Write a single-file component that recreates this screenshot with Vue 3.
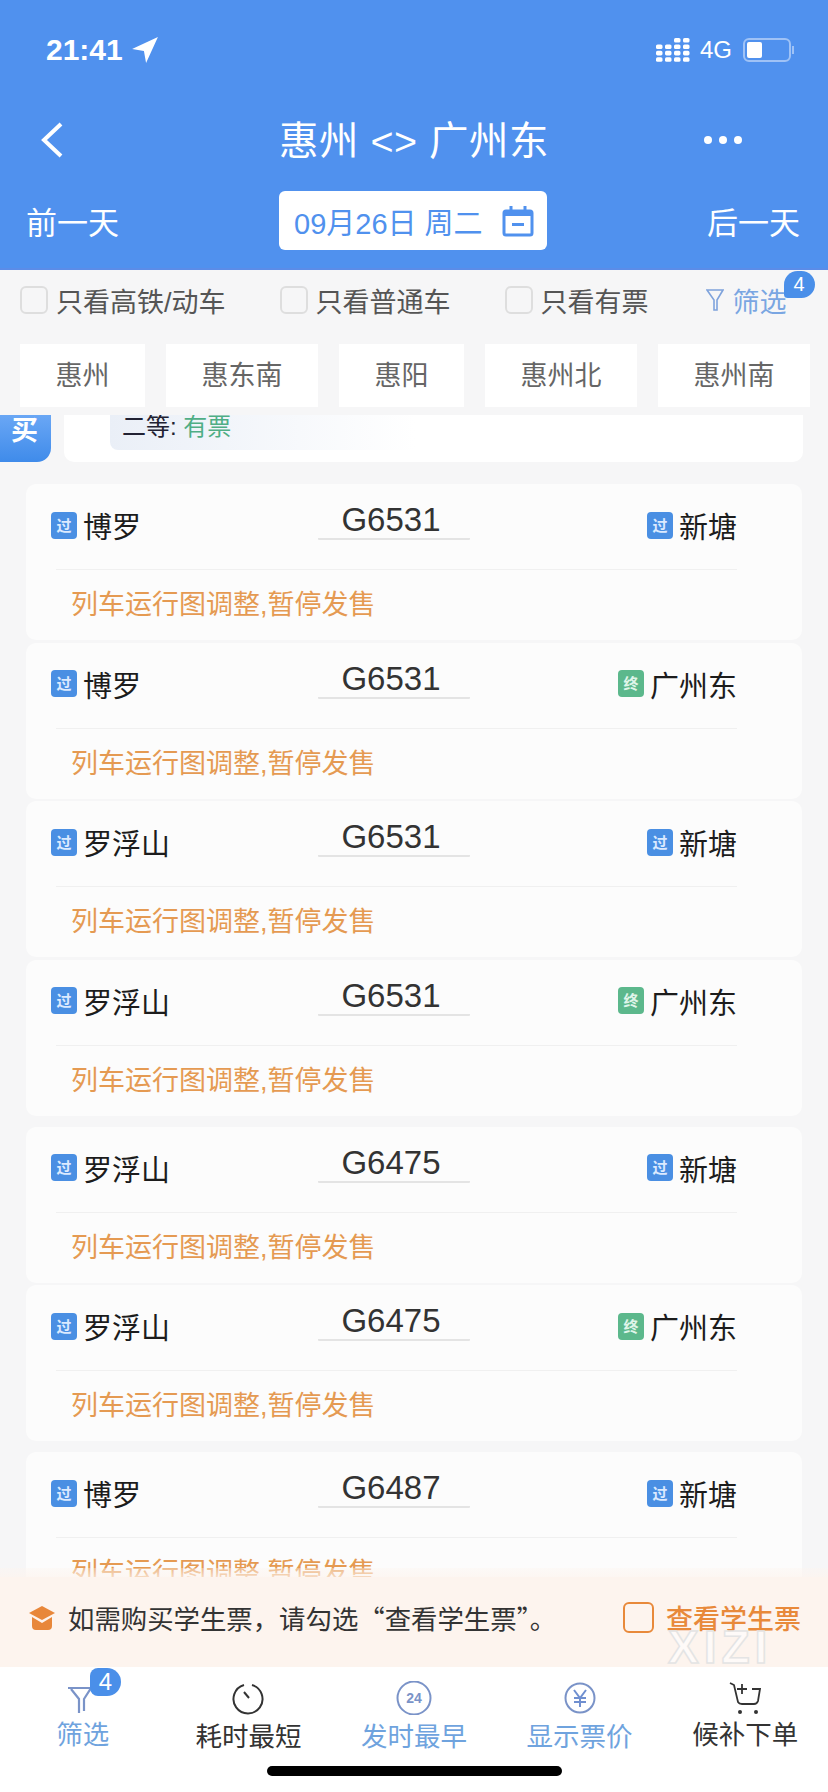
<template>
  <div class="page">
    <div class="header">
      <div class="status">
        <div class="time">
          21:41
          <svg class="loc" viewBox="0 0 26 26"><path d="M25 1 L1 12 L12 14 L14 25 Z" fill="#fff" /></svg>
        </div>
        <div class="status-right">
          <svg class="signal" width="34" height="25" viewBox="0 0 34 25">
            <g fill="#fff">
              <rect v-for="d in signalDots" :key="d.x + '-' + d.y" :x="d.x" :y="d.y" width="6.5" height="4.6" rx="1.6" />
            </g>
          </svg>
          <span class="net">4G</span>
          <div class="battery"><div class="battery-fill"></div></div>
          <div class="battery-tip"></div>
        </div>
      </div>
      <div class="nav">
        <svg class="back" width="24" height="36" viewBox="0 0 24 36">
          <path d="M21 2 L4 18 L21 34" fill="none" stroke="#fff" stroke-width="4" />
        </svg>
        <div class="title">惠州 &lt;&gt; 广州东</div>
        <div class="dots"><i></i><i></i><i></i></div>
      </div>
      <div class="date-row">
        <span class="day">前一天</span>
        <div class="date-box">
          <span>09月26日 周二</span>
          <svg width="32" height="32" viewBox="0 0 32 32">
            <g fill="none" stroke="#5091ee" stroke-width="3">
              <rect x="2" y="6" width="28" height="24" rx="2" />
              <path d="M9 1 V9 M23 1 V9" />
            </g>
            <rect x="2" y="6" width="28" height="5" fill="#5091ee" />
            <rect x="10" y="18" width="12" height="3" fill="#5091ee" />
          </svg>
        </div>
        <span class="day right">后一天</span>
      </div>
    </div>

    <div class="filters">
      <label class="check" v-for="f in filters" :key="f"><i class="box"></i>{{ f }}</label>
      <div class="filter-btn">
        <svg width="18" height="24" viewBox="0 0 18 24">
          <path d="M1 2 H17 L11 12 V22 L8 22 V12 Z" fill="none" stroke="#7fa3dc" stroke-width="1.6" />
        </svg>
        <span>筛选</span>
        <em class="badge small">4</em>
      </div>
    </div>

    <div class="stations">
      <div class="station" v-for="s in stations" :key="s">{{ s }}</div>
    </div>

    <div class="list">
      <div class="partial">
        <div class="buy">买</div>
        <div class="partial-card">
          <div class="seat">二等: <span>有票</span></div>
        </div>
      </div>

      <div class="group" v-for="(group, i) in groups" :key="i">
        <div class="card" v-for="(t, j) in group" :key="j">
          <div class="row">
            <div class="stop">
              <i class="tag">过</i>{{ t.from }}
            </div>
            <div class="train">{{ t.no }}</div>
            <div class="stop end">
              <i class="tag" :class="{ green: t.to === '广州东' }">{{ t.to === '广州东' ? '终' : '过' }}</i>{{ t.to }}
            </div>
          </div>
          <div class="line"></div>
          <div class="msg">列车运行图调整,暂停发售</div>
        </div>
      </div>
    </div>

    <div class="notice">
      <svg class="cap" width="28" height="26" viewBox="0 0 28 26">
        <path d="M14 1 L27 8 L14 15 L1 8 Z" fill="#e8873a" />
        <path d="M4 12 L14 18 L24 12 V21 Q24 25 20 25 H8 Q4 25 4 21 Z" fill="#e8873a" />
      </svg>
      <span class="notice-text">如需购买学生票，请勾选“查看学生票”。</span>
      <i class="notice-box"></i>
      <span class="notice-link">查看学生票</span>
    </div>

    <div class="tabs">
      <div class="tab on">
        <svg class="icon" width="36" height="34" viewBox="0 0 36 34">
          <path d="M3 7 H26 L19 18 V30 M14 32 V18 L6 8" fill="none" stroke="#7a93c8" stroke-width="2.2" />
        </svg>
        <em class="badge">4</em>
        <span class="up">筛选</span>
      </div>
      <div class="tab">
        <svg class="icon" width="36" height="34" viewBox="0 0 36 34">
          <path d="M14 4 A14.5 14.5 0 1 0 22 4" fill="none" stroke="#333" stroke-width="2" />
          <path d="M14 11 L19 17" stroke="#333" stroke-width="2" />
        </svg>
        <span>耗时最短</span>
      </div>
      <div class="tab on">
        <svg class="icon" width="36" height="34" viewBox="0 0 36 34">
          <circle cx="18" cy="17" r="16.5" fill="none" stroke="#7a93c8" stroke-width="2" />
          <text x="18" y="22" text-anchor="middle" class="svg-num">24</text>
        </svg>
        <span>发时最早</span>
      </div>
      <div class="tab on">
        <svg class="icon" width="36" height="34" viewBox="0 0 36 34">
          <circle cx="18" cy="17" r="14.5" fill="none" stroke="#7a93c8" stroke-width="2" />
          <path d="M12 9 L18 17 L24 9 M12 17 H24 M12 21 H24 M18 17 V26" fill="none" stroke="#6f8fd0" stroke-width="2" />
        </svg>
        <span>显示票价</span>
      </div>
      <div class="tab">
        <svg class="icon" width="36" height="34" viewBox="0 0 36 34">
          <path d="M3 2 L7 4 L11 21 Q12 23 15 23 H27 Q30 23 31 20 L33 8 H25 M10 8 H20 M15 3 V13" fill="none" stroke="#333" stroke-width="1.8" />
          <circle cx="13" cy="31" r="2" fill="#333" />
          <circle cx="29" cy="31" r="2" fill="#333" />
        </svg>
        <span class="up">候补下单</span>
      </div>
    </div>

    <div class="home"></div>
    <div class="mark">XIZI</div>
  </div>
</template>

<script setup>
const filters = ["只看高铁/动车", "只看普通车", "只看有票"];
const stations = ["惠州", "惠东南", "惠阳", "惠州北", "惠州南"];

const groups = [
  [
    { from: "博罗", no: "G6531", to: "新塘" },
    { from: "博罗", no: "G6531", to: "广州东" },
    { from: "罗浮山", no: "G6531", to: "新塘" },
    { from: "罗浮山", no: "G6531", to: "广州东" },
  ],
  [
    { from: "罗浮山", no: "G6475", to: "新塘" },
    { from: "罗浮山", no: "G6475", to: "广州东" },
  ],
  [{ from: "博罗", no: "G6487", to: "新塘" }],
];

// 信号格：四列点阵，右边两列高一格
const signalDots = [];
for (let col = 0; col < 4; col++) {
  for (let row = col < 2 ? 1 : 0; row < 4; row++) {
    signalDots.push({ x: col * 9, y: row * 6.4 });
  }
}
</script>

<style>
html,
body {
  margin: 0;
  background: #fff;
}
</style>

<style scoped>
.page {
  position: relative;
  display: flex;
  flex-direction: column;
  width: 828px;
  height: 1792px;
  overflow: hidden;
  background: #f6f6f7;
  font-family: "Liberation Sans", "Noto Sans CJK SC", sans-serif;
  color: #333;
}

/* 顶部蓝色区域 */
.header {
  flex: none;
  height: 270px;
  box-sizing: border-box;
  background: #5091ee;
  color: #fff;
  border-bottom: 2px solid #5b8ce8;
}
.status {
  height: 100px;
  display: flex;
  align-items: center;
  justify-content: space-between;
  padding: 0 34px 0 46px;
}
.time {
  display: flex;
  align-items: center;
  gap: 8px;
  font-size: 30px;
  font-weight: 700;
}
.loc {
  width: 28px;
  height: 28px;
}
.status-right {
  display: flex;
  align-items: center;
}
.net {
  margin-left: 10px;
  font-size: 24px;
  width: 43px;
}
.battery {
  width: 48px;
  height: 24px;
  box-sizing: border-box;
  border: 2px solid rgba(255, 255, 255, 0.45);
  border-radius: 6px;
  padding: 2px;
}
.battery-fill {
  width: 15px;
  height: 100%;
  background: #fff;
  border-radius: 2px;
}
.battery-tip {
  width: 2px;
  height: 8px;
  margin-left: 1px;
  background: rgba(255, 255, 255, 0.45);
}
.nav {
  height: 80px;
  display: grid;
  grid-template-columns: 1fr auto 1fr;
  align-items: center;
  padding: 0 86px 0 40px;
}
.title {
  font-size: 39.5px;
  letter-spacing: 0.5px;
  margin: 0 0 6px 46px;
}
.dots {
  display: flex;
  justify-content: flex-end;
  gap: 7px;
}
.dots i {
  width: 8px;
  height: 8px;
  border-radius: 50%;
  background: #fff;
}
.date-row {
  margin-top: 11px;
  display: grid;
  grid-template-columns: 1fr 268px 1fr;
  align-items: center;
  padding: 0 28px 0 26px;
}
.day {
  font-size: 31px;
}
.day.right {
  text-align: right;
}
.date-box {
  height: 59px;
  box-sizing: border-box;
  display: flex;
  align-items: center;
  justify-content: space-between;
  padding: 0 13px 0 15px;
  border-radius: 6px;
  background: #fff;
  color: #5091ee;
  font-size: 29px;
  white-space: nowrap;
}

/* 筛选条 */
.filters {
  flex: none;
  height: 60px;
  display: flex;
  align-items: center;
  gap: 54px;
  padding-left: 20px;
  font-size: 27px;
  color: #555;
}
.check {
  display: flex;
  align-items: center;
  gap: 8px;
}
.box {
  width: 28px;
  height: 28px;
  box-sizing: border-box;
  border: 2px solid #dedede;
  border-radius: 6px;
}
.filter-btn {
  position: relative;
  display: flex;
  align-items: center;
  gap: 9px;
  margin-left: 3px;
  color: #7aa6e2;
}
.badge {
  position: absolute;
  display: block;
  font-style: normal;
  text-align: center;
  color: #fff;
  background: #4a8fe9;
}
.badge.small {
  left: 78px;
  top: -10px;
  width: 31px;
  height: 27px;
  line-height: 27px;
  border-radius: 14px 14px 14px 4px;
  font-size: 20px;
}

.stations {
  flex: none;
  display: flex;
  gap: 21px;
  margin: 14px 18px 8px 20px;
}
.station {
  flex: 1 1 auto;
  height: 63px;
  line-height: 64px;
  padding: 0 34px;
  text-align: center;
  white-space: nowrap;
  background: #fff;
  font-size: 27px;
  color: #666;
}

/* 车次列表 */
.list {
  flex: none;
  height: 1162px;
  overflow: hidden;
}
.partial {
  display: flex;
  height: 47px;
  margin-bottom: 22px;
}
.buy {
  width: 51px;
  box-sizing: border-box;
  padding: 0 0 0 11px;
  line-height: 32px;
  font-size: 27px;
  font-weight: 700;
  color: #fff;
  background: linear-gradient(#6aa7f5, #3f8bea);
  border-radius: 0 0 14px 0;
}
.partial-card {
  width: 739px;
  margin-left: 13px;
  background: #fff;
  border-radius: 0 0 10px 10px;
}
.seat {
  width: 293px;
  height: 35px;
  margin-left: 46px;
  padding-left: 12px;
  line-height: 24px;
  font-size: 24px;
  color: #223;
  border-radius: 0 0 0 8px;
  background: linear-gradient(90deg, #eaeff7, #ffffff);
}
.seat span {
  color: #4fae85;
}
.group {
  margin-bottom: 11px;
}
.card {
  height: 156px;
  margin: 0 26px 2.6px;
  border-radius: 10px;
  background: #fcfcfc;
}
.row {
  height: 85px;
  box-sizing: border-box;
  padding-bottom: 3px;
  display: grid;
  grid-template-columns: 1fr 152px 1fr;
  align-items: center;
  margin: 0 65px 0 25px;
}
.line {
  height: 1px;
  margin: 0 65px 0 30px;
  background: #f0f0f0;
}
.stop {
  display: flex;
  align-items: center;
  gap: 6px;
  font-size: 29px;
  color: #1c1c1c;
}
.stop.end {
  justify-content: flex-end;
}
.tag {
  width: 26px;
  height: 27px;
  line-height: 27px;
  text-align: center;
  font-style: normal;
  font-size: 15px;
  font-weight: 700;
  color: #dceaff;
  background: #4a8fe3;
  border-radius: 4px;
}
.tag.green {
  background: #5cb88c;
  color: #e0f5ea;
}
.train {
  align-self: start;
  margin-top: 17px;
  height: 37px;
  line-height: 37px;
  padding-right: 6px;
  text-align: center;
  font-size: 33px;
  color: #333;
  border-bottom: 2px solid #e4e4e4;
  border-radius: 1px;
}
.msg {
  height: 70px;
  line-height: 70px;
  padding-left: 45px;
  font-size: 27px;
  color: #e59a52;
}

/* 学生票提示 */
.notice {
  flex: none;
  position: relative;
  height: 90px;
  box-sizing: border-box;
  padding: 0 0 9px 28px;
  display: flex;
  align-items: center;
  background: #fdf4ee;
}
.notice::before {
  content: "";
  position: absolute;
  left: 0;
  right: 0;
  top: -9px;
  height: 9px;
  background: linear-gradient(rgba(253, 244, 238, 0.35), rgba(253, 244, 238, 0.7));
}
.notice-text {
  width: 477px;
  margin-left: 12px;
  font-family: "Noto Sans CJK SC", sans-serif;
  font-size: 26.4px;
  white-space: nowrap;
  color: #333;
}
.notice-box {
  width: 31px;
  height: 31px;
  box-sizing: border-box;
  margin-left: 78px;
  border: 2px solid #e8893a;
  border-radius: 6px;
}
.notice-link {
  margin-left: 12px;
  font-size: 27px;
  font-weight: 500;
  color: #e8893a;
}

/* 底部按钮 */
.tabs {
  flex: 1;
  display: grid;
  grid-template-columns: repeat(5, 1fr);
  background: #fff;
}
.tab {
  position: relative;
  display: flex;
  flex-direction: column;
  align-items: center;
  padding-top: 14px;
  font-size: 26.5px;
  color: #333;
}
.tab.on {
  color: #6fa3de;
}
.tab span {
  margin-top: 4px;
  line-height: 36px;
}
.tab span.up {
  margin-top: 2px;
}
.icon {
  display: block;
}
.tab .badge {
  left: 90px;
  top: 1px;
  width: 31px;
  height: 28px;
  line-height: 28px;
  border-radius: 8px 14px 14px 8px;
  font-size: 24px;
}
.svg-num {
  font-family: "Liberation Sans", sans-serif;
  font-size: 14px;
  font-weight: 700;
  fill: #7a93c8;
}

.home {
  position: absolute;
  left: 267px;
  top: 1766px;
  width: 295px;
  height: 10px;
  border-radius: 5px;
  background: #000;
}
.mark {
  position: absolute;
  left: 668px;
  top: 1620px;
  font-size: 46px;
  letter-spacing: 5px;
  font-weight: 700;
  color: rgba(255, 255, 255, 0.6);
  -webkit-text-stroke: 1.5px #e4e4e4;
}
</style>
